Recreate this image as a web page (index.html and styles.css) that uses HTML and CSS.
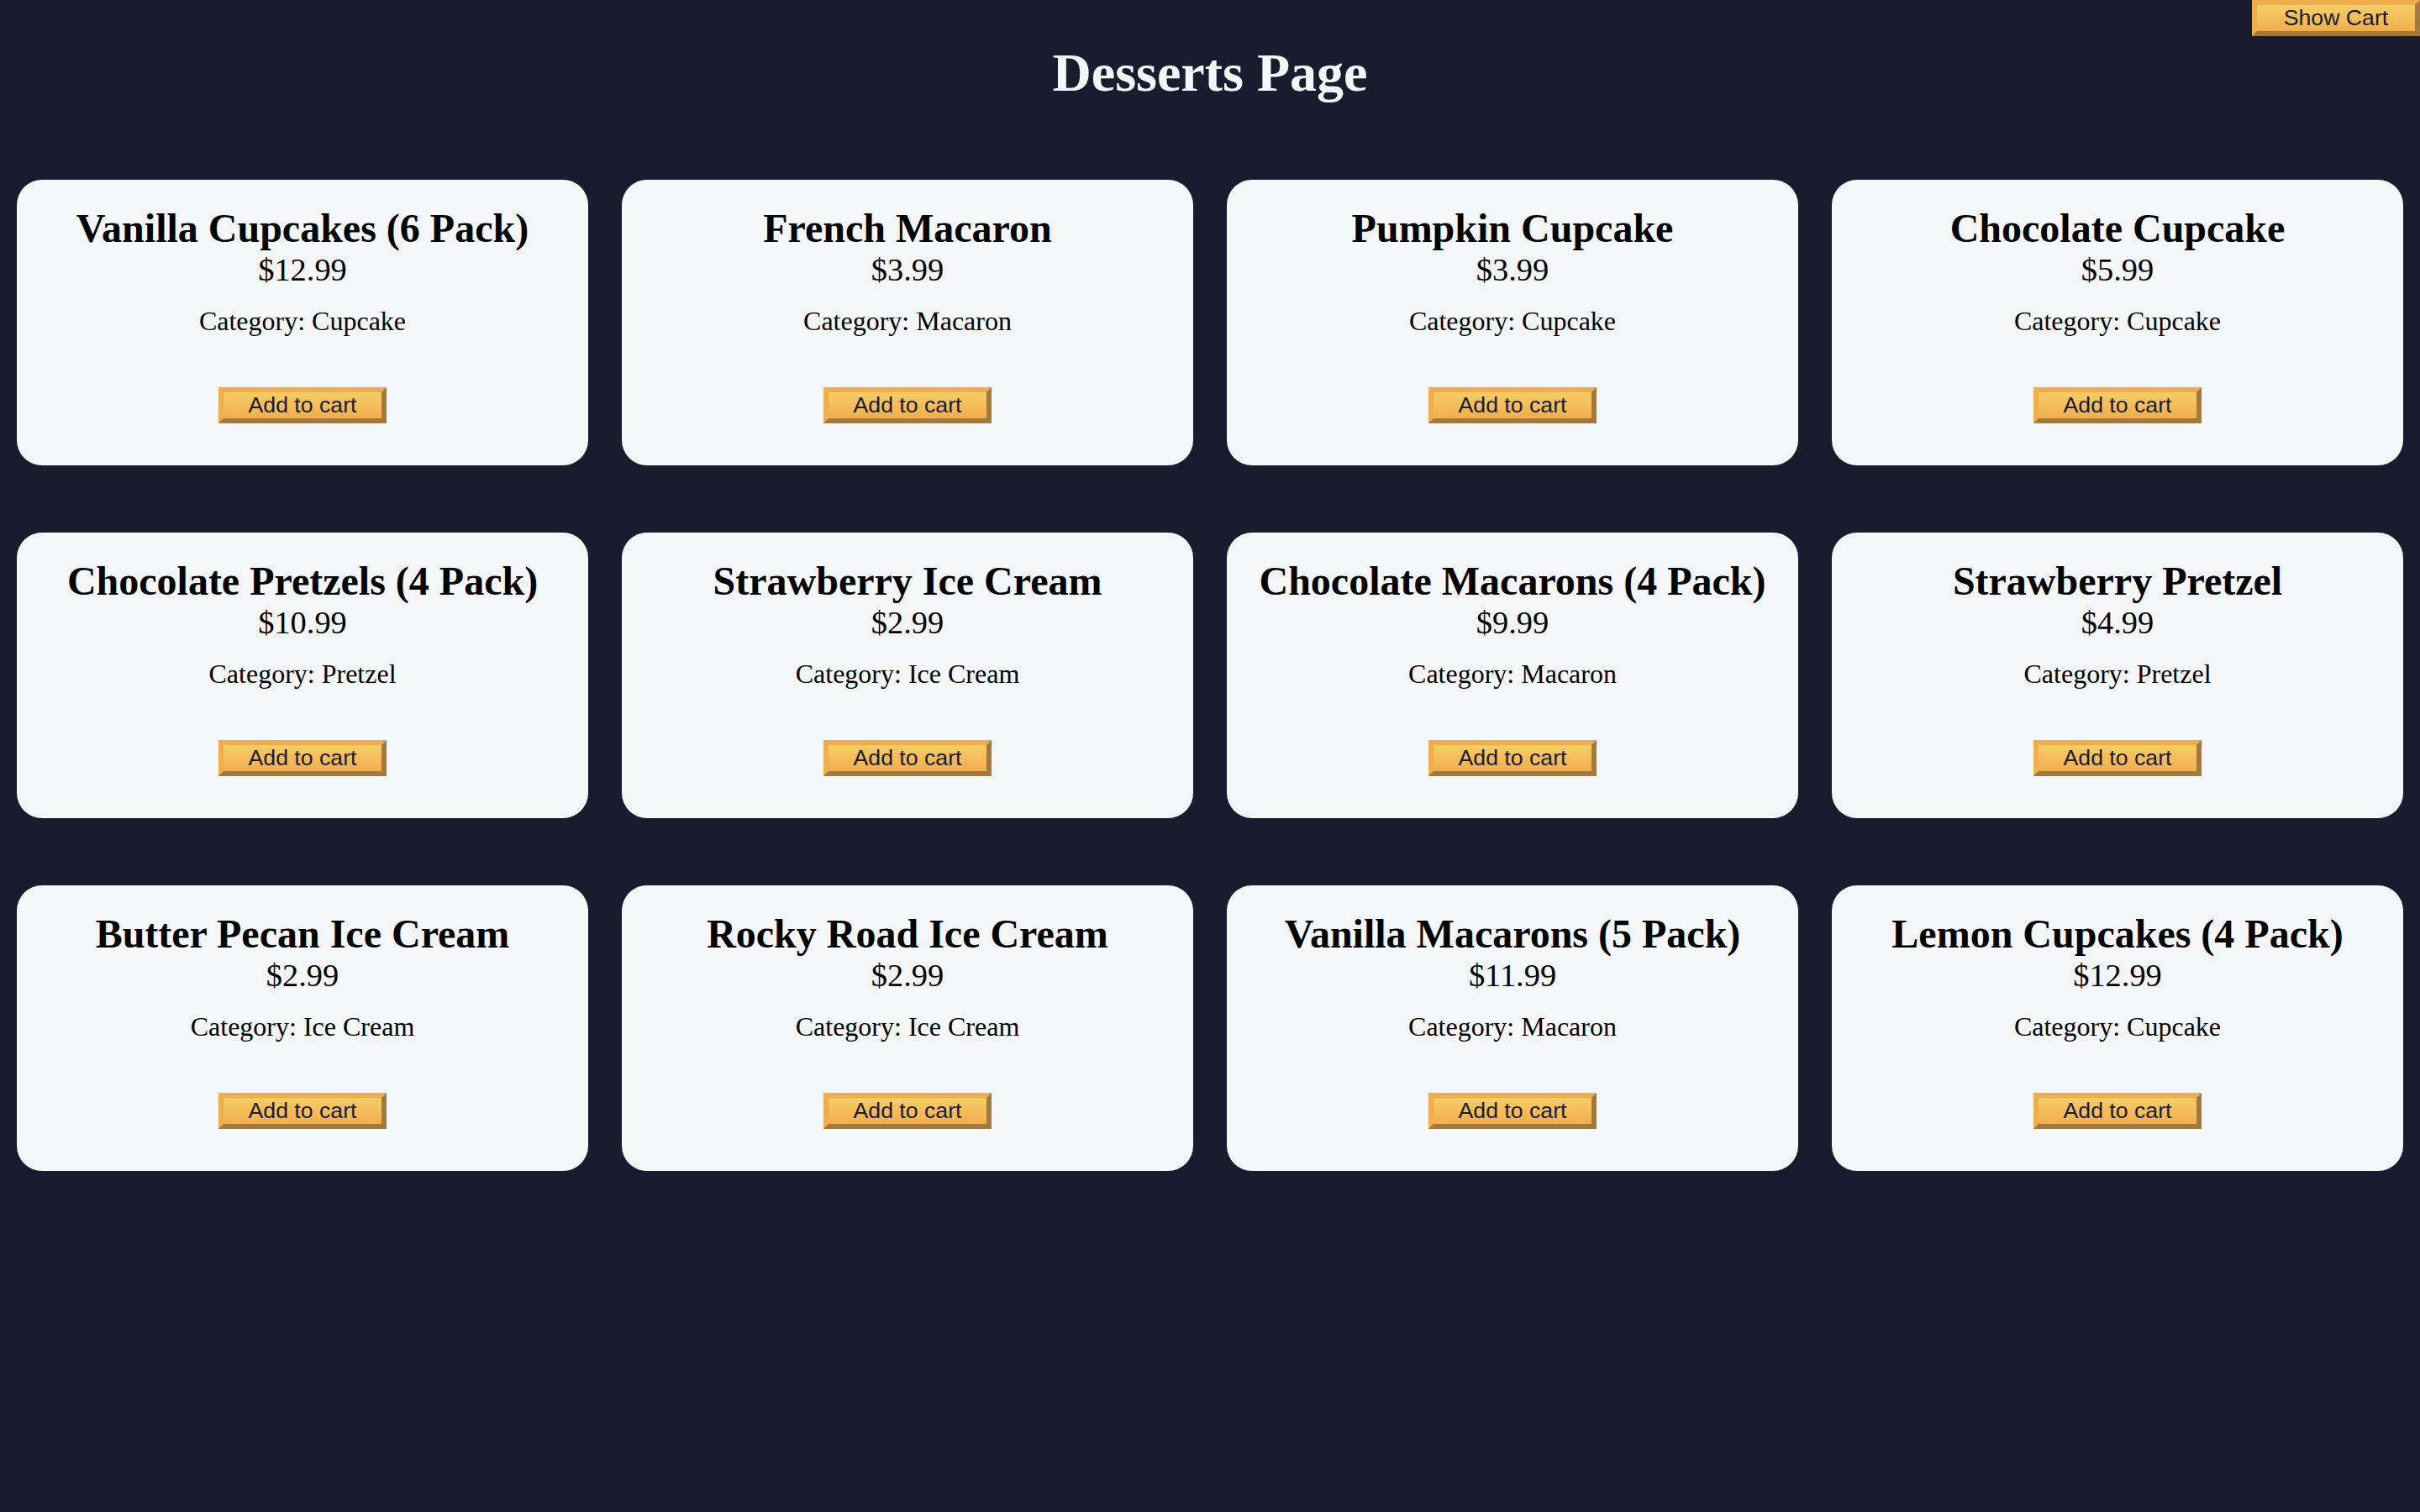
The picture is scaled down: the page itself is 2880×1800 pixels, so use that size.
FILE: index.html
```html
<!DOCTYPE html>
<html lang="en">
<head>
<meta charset="utf-8">
<title>Desserts Page</title>
<link rel="stylesheet" href="styles.css">
</head>
<body>
<header>
  <h1 class="title">Desserts Page</h1>
</header>
<main>
  <button type="button" class="btn cart-btn">Show Cart</button>
  <div class="products">
    <div class="dessert-card"><h2>Vanilla Cupcakes (6 Pack)</h2><p class="dessert-price">$12.99</p><p class="product-category">Category: Cupcake</p><button class="btn add-to-cart-btn">Add to cart</button></div>
    <div class="dessert-card"><h2>French Macaron</h2><p class="dessert-price">$3.99</p><p class="product-category">Category: Macaron</p><button class="btn add-to-cart-btn">Add to cart</button></div>
    <div class="dessert-card"><h2>Pumpkin Cupcake</h2><p class="dessert-price">$3.99</p><p class="product-category">Category: Cupcake</p><button class="btn add-to-cart-btn">Add to cart</button></div>
    <div class="dessert-card"><h2>Chocolate Cupcake</h2><p class="dessert-price">$5.99</p><p class="product-category">Category: Cupcake</p><button class="btn add-to-cart-btn">Add to cart</button></div>
    <div class="dessert-card"><h2>Chocolate Pretzels (4 Pack)</h2><p class="dessert-price">$10.99</p><p class="product-category">Category: Pretzel</p><button class="btn add-to-cart-btn">Add to cart</button></div>
    <div class="dessert-card"><h2>Strawberry Ice Cream</h2><p class="dessert-price">$2.99</p><p class="product-category">Category: Ice Cream</p><button class="btn add-to-cart-btn">Add to cart</button></div>
    <div class="dessert-card"><h2>Chocolate Macarons (4 Pack)</h2><p class="dessert-price">$9.99</p><p class="product-category">Category: Macaron</p><button class="btn add-to-cart-btn">Add to cart</button></div>
    <div class="dessert-card"><h2>Strawberry Pretzel</h2><p class="dessert-price">$4.99</p><p class="product-category">Category: Pretzel</p><button class="btn add-to-cart-btn">Add to cart</button></div>
    <div class="dessert-card"><h2>Butter Pecan Ice Cream</h2><p class="dessert-price">$2.99</p><p class="product-category">Category: Ice Cream</p><button class="btn add-to-cart-btn">Add to cart</button></div>
    <div class="dessert-card"><h2>Rocky Road Ice Cream</h2><p class="dessert-price">$2.99</p><p class="product-category">Category: Ice Cream</p><button class="btn add-to-cart-btn">Add to cart</button></div>
    <div class="dessert-card"><h2>Vanilla Macarons (5 Pack)</h2><p class="dessert-price">$11.99</p><p class="product-category">Category: Macaron</p><button class="btn add-to-cart-btn">Add to cart</button></div>
    <div class="dessert-card"><h2>Lemon Cupcakes (4 Pack)</h2><p class="dessert-price">$12.99</p><p class="product-category">Category: Cupcake</p><button class="btn add-to-cart-btn">Add to cart</button></div>
  </div>
</main>
</body>
</html>
```
FILE: styles.css
```css
* {
  margin: 0;
  padding: 0;
  box-sizing: border-box;
}

body {
  background-color: #1b1b2f;
  font-family: "Liberation Serif", "Times New Roman", serif;
  color: #000;
  min-height: 1800px;
}

.title {
  color: #f5f6f7;
  text-align: center;
  font-size: 64px;
  line-height: 74px;
  font-weight: bold;
  margin: 50px 0;
}

.products {
  display: grid;
  grid-template-columns: repeat(4, 1fr);
  column-gap: 40px;
  row-gap: 80px;
  padding: 40px 20px;
}

.dessert-card {
  background-color: #f5f6f7;
  border-radius: 30px;
  padding: 30px;
  text-align: center;
  display: flex;
  flex-direction: column;
  align-items: center;
}

.dessert-card h2 {
  font-size: 48px;
  line-height: 55px;
  font-weight: bold;
}

.dessert-price {
  font-size: 38.4px;
  line-height: 44px;
}

.product-category {
  font-size: 32px;
  line-height: 37px;
  margin: 21px 0 20px;
}

.btn {
  width: 200px;
  height: 43px;
  font-family: "Liberation Sans", Arial, sans-serif;
  font-size: 26.67px;
  line-height: 29px;
  color: #1b1b32;
  background-color: #f2b04e;
  background-image: linear-gradient(#f7cd66, #f1ae4e);
  border-style: solid;
  border-width: 6px;
  border-color: #efad4d #a5793a #a5793a #efad4d;
  padding: 0;
  cursor: pointer;
  text-align: center;
}

.add-to-cart-btn {
  margin-top: 40px;
  margin-bottom: 20px;
}

.cart-btn {
  position: absolute;
  top: 0;
  right: 0;
}
```
